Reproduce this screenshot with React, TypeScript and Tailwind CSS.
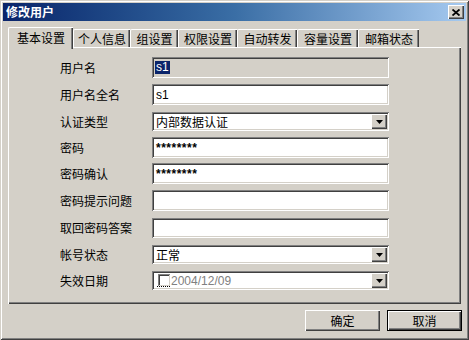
import React from "react";

const raised =
  "shadow-[inset_1px_1px_0_#ffffff,inset_-1px_-1px_0_#404040,inset_-2px_-2px_0_#808080]";
const sunken =
  "shadow-[inset_1px_1px_0_#808080,inset_-1px_-1px_0_#ffffff,inset_2px_2px_0_#404040,inset_-2px_-2px_0_#D4D0C8]";

function DropBtn() {
  return (
    <div
      className={`absolute right-[2px] top-[2px] bottom-[2px] w-[16px] bg-[#D4D0C8] ${raised} flex items-center justify-center`}
    >
      <svg width="7" height="4" viewBox="0 0 7 4">
        <path d="M0 0H7L3.5 4Z" fill="#000" />
      </svg>
    </div>
  );
}

function Row({
  label,
  className,
  children,
}: {
  label: string;
  className: string;
  children: React.ReactNode;
}) {
  return (
    <div className={`flex items-center ${className}`}>
      <div className="w-[144px] shrink-0 pl-[52px] text-[12px] leading-[14px] text-black whitespace-nowrap">
        {label}
      </div>
      {children}
    </div>
  );
}

export default function App() {
  const tabs = [
    { t: "个人信息", w: "w-[57px]" },
    { t: "组设置", w: "w-[48px]" },
    { t: "权限设置", w: "w-[59px]" },
    { t: "自动转发", w: "w-[60px]" },
    { t: "容量设置", w: "w-[61px]" },
    { t: "邮箱状态", w: "w-[61px]" },
  ];
  return (
    <div className="w-[469px] h-[340px] bg-[#D4D0C8] p-[3px] flex flex-col font-['Noto_Sans_CJK_SC',sans-serif] text-black shadow-[inset_1px_1px_0_#D4D0C8,inset_-1px_-1px_0_#404040,inset_2px_2px_0_#ffffff,inset_-2px_-2px_0_#808080] select-none">
      {/* title bar */}
      <div className="h-[18px] flex items-center justify-between bg-linear-to-r from-[#0A246A] via-[#3A6EA5] to-[#A6CAF0] pl-[3px] pr-[2px]">
        <span className="text-white font-bold text-[12px] leading-[14px]">修改用户</span>
        <div
          className={`w-[16px] h-[14px] bg-[#D4D0C8] ${raised} flex items-center justify-center`}
        >
          <svg width="8" height="7" viewBox="0 0 8 7">
            <path d="M0.5 0.5L7.5 6.5M7.5 0.5L0.5 6.5" stroke="#000" strokeWidth="1.8" />
          </svg>
        </div>
      </div>

      <div className="px-[5px] flex flex-col">
        {/* tabs */}
        <div className="mt-[6px] h-[20px] flex items-end">
          <div className="relative z-10 w-[65px] h-[22px] -mb-[2px] bg-[#D4D0C8] border-l border-t border-white rounded-tl-[2px] shadow-[inset_-1px_0_0_#404040,inset_-2px_0_0_#808080] flex items-start justify-center pt-[3px] text-[12px] leading-[14px]">
            基本设置
          </div>
          {tabs.map((tab) => (
            <div
              key={tab.t}
              className={`${tab.w} h-[18px] bg-[#D4D0C8] border-l border-t border-white rounded-tl-[2px] shadow-[inset_-1px_0_0_#404040,inset_-2px_0_0_#808080] flex items-center justify-center pt-[1px] text-[12px] leading-[14px]`}
            >
              {tab.t}
            </div>
          ))}
        </div>

        {/* panel */}
        <div className="h-[257px] bg-[#D4D0C8] shadow-[inset_1px_1px_0_#ffffff,inset_-1px_-1px_0_#404040,inset_-2px_-2px_0_#808080] pt-[10px] flex flex-col">
          <Row label="用户名" className="h-[21px]">
            <div className={`relative w-[237px] h-[21px] bg-[#D4D0C8] ${sunken} flex items-center pl-[3px]`}>
              <span className="bg-[#0A246A] text-white text-[12px] leading-[13px] px-[1px] font-['Liberation_Sans',sans-serif]">
                s1
              </span>
            </div>
          </Row>
          <Row label="用户名全名" className="h-[21px] mt-[6px]">
            <div className={`w-[237px] h-[21px] bg-white ${sunken} flex items-center pl-[4px] text-[12px] font-['Liberation_Sans',sans-serif]`}>
              s1
            </div>
          </Row>
          <Row label="认证类型" className="h-[19px] mt-[7px]">
            <div className={`relative w-[237px] h-[19px] bg-white ${sunken} flex items-center pl-[4px] text-[12px] leading-[14px]`}>
              内部数据认证
              <DropBtn />
            </div>
          </Row>
          <Row label="密码" className="h-[21px] mt-[6px]">
            <div className={`w-[237px] h-[21px] bg-white ${sunken} flex items-center pl-[4px] text-[12px] font-bold tracking-[0.5px] font-['Liberation_Sans',sans-serif]`}>
              ********
            </div>
          </Row>
          <Row label="密码确认" className="h-[21px] mt-[5px]">
            <div className={`w-[237px] h-[21px] bg-white ${sunken} flex items-center pl-[4px] text-[12px] font-bold tracking-[0.5px] font-['Liberation_Sans',sans-serif]`}>
              ********
            </div>
          </Row>
          <Row label="密码提示问题" className="h-[21px] mt-[6px]">
            <div className={`w-[237px] h-[21px] bg-white ${sunken}`} />
          </Row>
          <Row label="取回密码答案" className="h-[20px] mt-[7px]">
            <div className={`w-[237px] h-[20px] bg-white ${sunken}`} />
          </Row>
          <Row label="帐号状态" className="h-[19px] mt-[7px]">
            <div className={`relative w-[237px] h-[19px] bg-white ${sunken} flex items-center pl-[4px] text-[12px] leading-[14px]`}>
              正常
              <DropBtn />
            </div>
          </Row>
          <Row label="失效日期" className="h-[19px] mt-[7px]">
            <div className={`relative w-[237px] h-[19px] bg-white ${sunken} flex items-center pl-[5px] text-[12px] leading-[14px]`}>
              <div className="flex flex-col items-center">
                <div className="w-[12px] h-[12px] bg-white shadow-[inset_1px_1px_0_#808080,inset_-1px_-1px_0_#D4D0C8,inset_2px_2px_0_#404040]" />
                <div className="w-[13px] h-0 border-b border-dotted border-black" />
              </div>
              <span className="ml-[1px] text-[#808080] font-['Liberation_Sans',sans-serif]">
                2004/12/09
              </span>
              <DropBtn />
            </div>
          </Row>
        </div>
      </div>

      {/* buttons */}
      <div className="mt-[6px] flex justify-end gap-[7px] pr-[4px]">
        <div className={`w-[75px] h-[21px] bg-[#D4D0C8] ${raised} flex items-center justify-center text-[12px] leading-[14px]`}>
          确定
        </div>
        <div className="w-[75px] h-[21px] border border-black">
          <div className={`w-full h-full bg-[#D4D0C8] ${raised} flex items-center justify-center text-[12px] leading-[14px]`}>
            取消
          </div>
        </div>
      </div>
    </div>
  );
}
